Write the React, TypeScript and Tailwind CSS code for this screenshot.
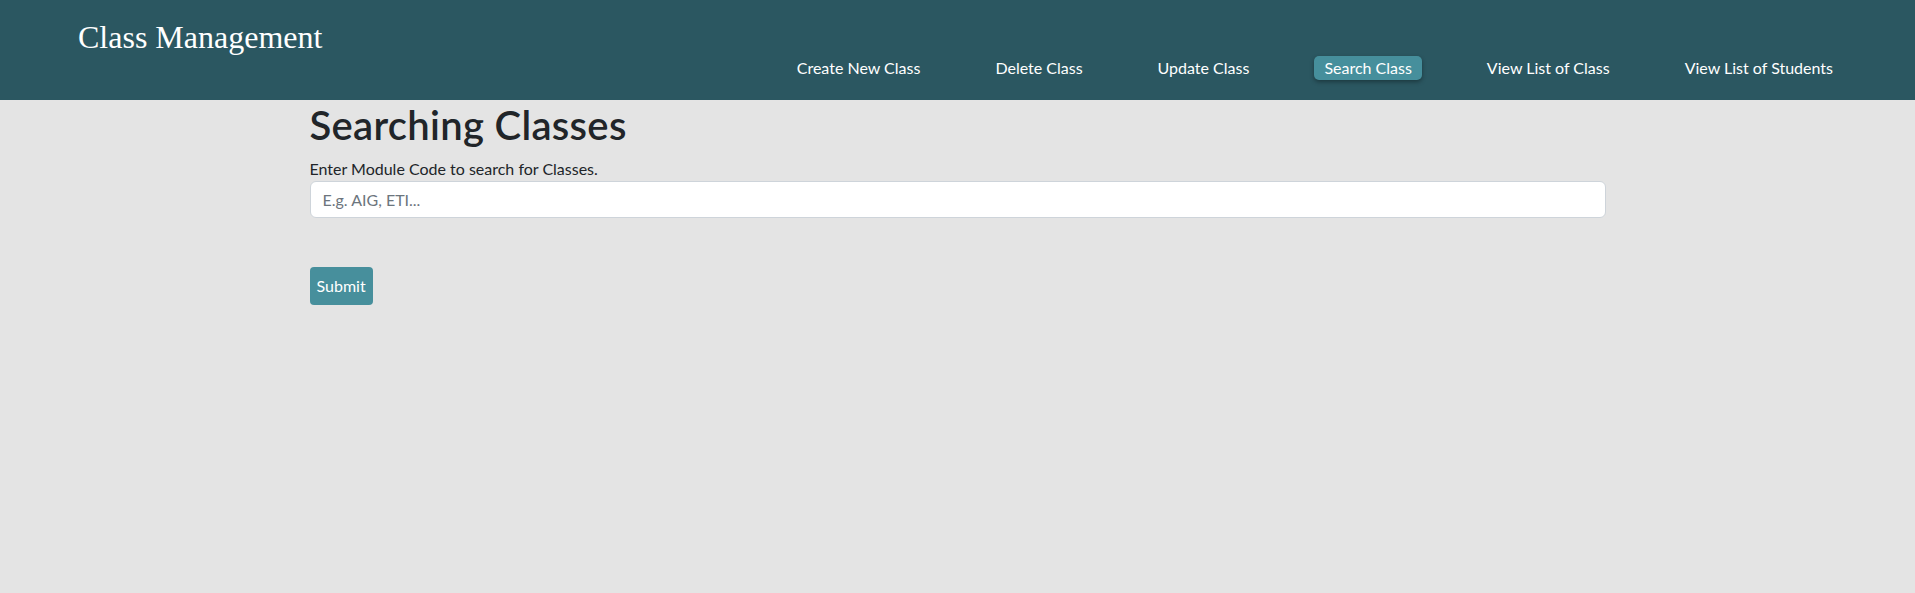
const links = [
  'Create New Class',
  'Delete Class',
  'Update Class',
  'Search Class',
  'View List of Class',
  'View List of Students',
]

const active = 'Search Class'

export default function App() {
  return (
    <div className="min-h-[593px] bg-[#e4e4e4] font-['Lato','Segoe_UI',sans-serif] text-[#212529]">
      {/* Top bar */}
      <header className="h-[100px] bg-[#2b5761] flex justify-between items-start pl-[78px] pr-[72px]">
        <div className="pt-[19px] font-['Liberation_Serif',serif] text-[32px] leading-[37px] text-white">
          Class Management
        </div>
        <nav className="mt-[56px] flex gap-[55px]">
          {links.map(l => (
            <a
              key={l}
              href="#"
              className={
                l === active
                  ? 'px-[10px] h-6 leading-6 text-base text-white rounded-[5px] bg-[#468f9c] shadow-[0_2px_4px_rgba(0,0,0,0.35)]'
                  : 'px-[10px] h-6 leading-6 text-base text-white'
              }
            >
              {l}
            </a>
          ))}
        </nav>
      </header>

      {/* Search form */}
      <main className="max-w-[1296px] mx-auto pt-px">
        <h1 className="text-[40px] leading-[48px] font-semibold tracking-[0.3px] mb-2">Searching Classes</h1>
        <label className="block text-base leading-6">Enter Module Code to search for Classes.</label>
        <input
          type="text"
          placeholder="E.g. AIG, ETI..."
          className="block w-full h-[37px] px-3 bg-white border border-[#ced4da] rounded-[6px] text-base placeholder:text-[#6c757d] outline-none"
        />
        <button className="mt-[49px] h-[38px] px-[7px] rounded bg-[#478f9c] text-white text-base leading-6">
          Submit
        </button>
      </main>
    </div>
  )
}
